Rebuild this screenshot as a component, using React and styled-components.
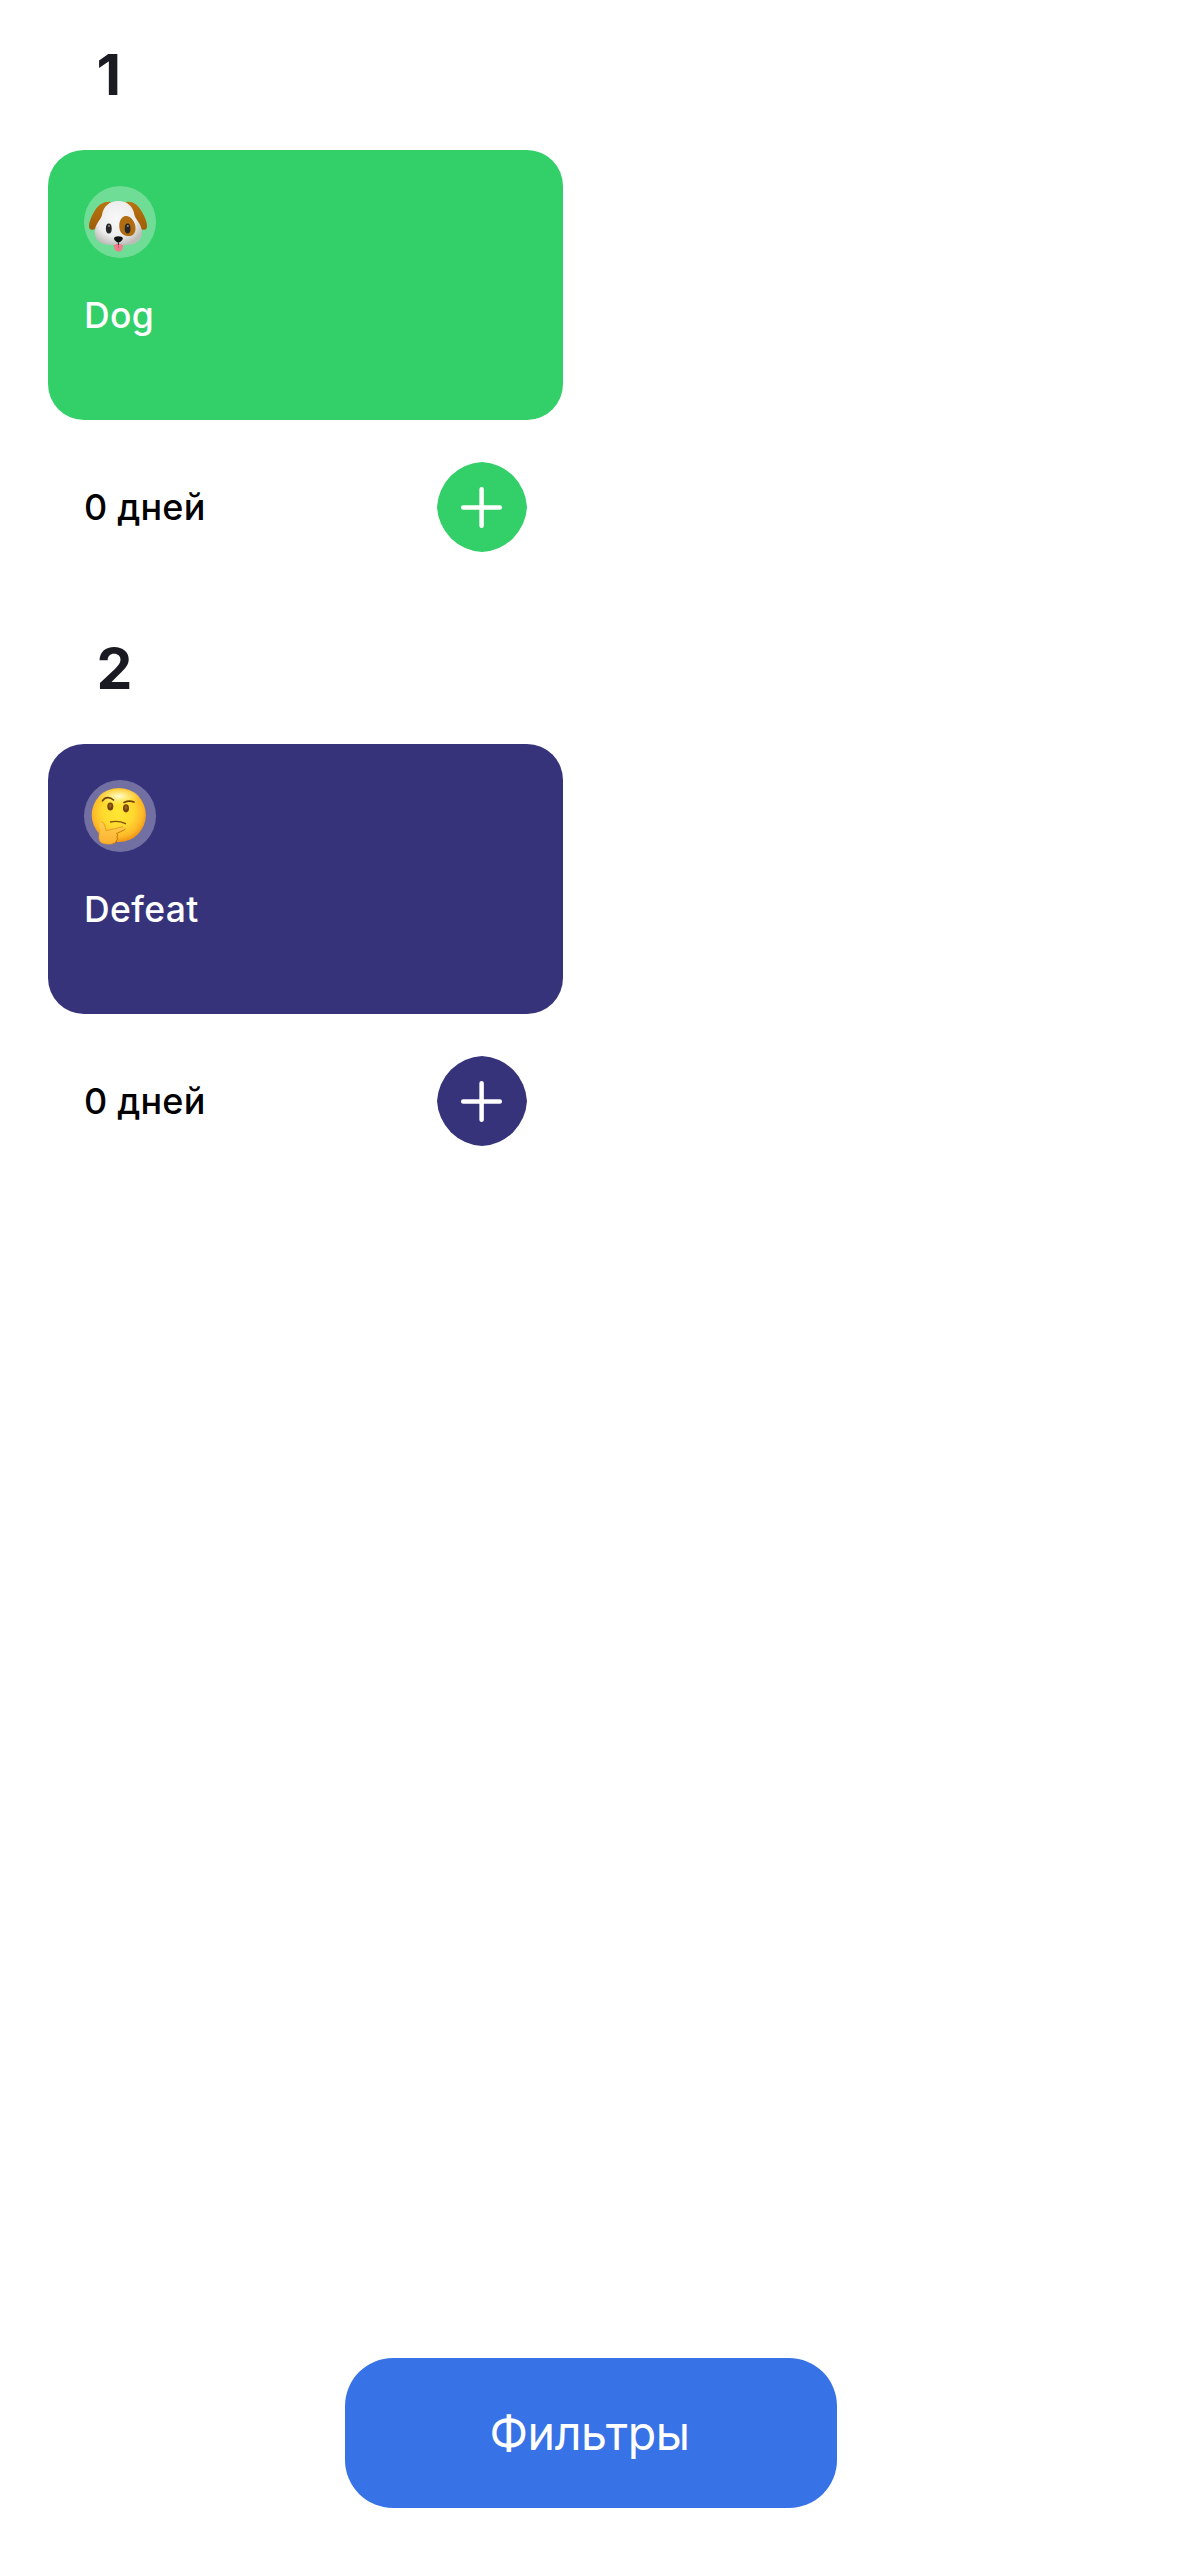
import React from "react";
import styled, { createGlobalStyle } from "styled-components";

const GlobalStyle = createGlobalStyle`
  * { box-sizing: border-box; }
  body { margin: 0; background: #fff; font-family: Inter, Roboto, sans-serif; }
`;

const Screen = styled.main`
  width: 1179px;
  height: 2556px;
  padding: 0 48px 48px;
  display: flex;
  flex-direction: column;
  background: #fff;
  overflow: hidden;
`;

const Section = styled.section`
  width: 515px;
  height: 594px;
  display: flex;
  flex-direction: column;
`;

const Heading = styled.h2`
  margin: 0;
  height: 150px;
  padding: 40px 0 0 48.5px;
  font-size: 57px;
  line-height: 70px;
  font-weight: 700;
  color: #1a1b22;
`;

const Card = styled.article`
  height: 270px;
  padding: 36px;
  border-radius: 36px;
  background: ${(p) => p.$color};
`;

const EmojiBadge = styled.div`
  width: 72px;
  height: 72px;
  border-radius: 50%;
  background: rgba(255, 255, 255, 0.3);
  svg { display: block; }
`;

const Name = styled.div`
  margin-top: 34px;
  font-size: 35.5px;
  line-height: 48px;
  font-weight: 500;
  letter-spacing: 0.4px;
  color: #fff;
`;

const Footer = styled.div`
  padding: 42px 36px 0;
  display: flex;
  align-items: center;
  justify-content: space-between;
`;

const Days = styled.span`
  font-size: 36px;
  line-height: 48px;
  font-weight: 500;
  letter-spacing: 0.2px;
  color: #000;
`;

const AddButton = styled.button`
  width: 90px;
  height: 90px;
  padding: 0;
  border: 0;
  background: none;
  color: ${(p) => p.$color};
  svg { display: block; }
`;

const FilterButton = styled.button`
  width: 492px;
  height: 150px;
  margin: auto 0 0 297px;
  padding: 0 3px 0 0;
  border: 0;
  border-radius: 48px;
  background: #3772e7;
  color: #fff;
  font-family: inherit;
  font-size: 46.5px;
  line-height: 60px;
  font-weight: 400;
  letter-spacing: -0.4px;
`;

const Dog = () => (
  <svg width="72" height="72" viewBox="0 0 72 72">
    <defs>
      <radialGradient id="fur" cx="0.46" cy="0.4" r="0.62">
        <stop offset="0" stopColor="#f8f8f8" />
        <stop offset="0.65" stopColor="#ededed" />
        <stop offset="1" stopColor="#bcbcb8" />
      </radialGradient>
      <linearGradient id="ear" x1="0" y1="0" x2="0" y2="1">
        <stop offset="0" stopColor="#b9730f" />
        <stop offset="1" stopColor="#9f5d08" />
      </linearGradient>
    </defs>
    <path d="M27 16C20 14.500 14 19 10 26C7 31 5 36 5 40C5 44 8 45 12 42.500L22 34Z" fill="url(#ear)" />
    <path d="M42 16C49 14.500 54 19 58 26C61 31 63 36 63 40C63 44 60 45 56 42.500L46 34Z" fill="url(#ear)" />
    <path d="M34.300 15C43 15 49 20 50.500 29C51 33 58 38 58 46C58 55.500 50 59 42 59H27C18.500 59 10.700 55.500 10.700 46C10.700 38 17.500 33 18 29C19.500 20 25.500 15 34.300 15Z" fill="url(#fur)" />
    <path d="M41.500 30C46.500 29.500 52 36 51.500 43C51 48.500 47.500 50.500 43.500 50C38.500 49.500 35.300 46 35.300 40C35.300 34 38 30.500 41.500 30Z" fill="#b06c10" />
    <ellipse cx="24.800" cy="42.500" rx="2.900" ry="5" fill="#262626" />
    <ellipse cx="43.600" cy="42.500" rx="2.900" ry="5" fill="#262626" />
    <circle cx="25" cy="40" r="1.100" fill="#888" />
    <circle cx="43.800" cy="40" r="1.100" fill="#888" />
    <path d="M30 59C31.500 57.500 37.500 57.500 39 59C39.500 63 37.500 65.500 34.500 65.500S29.500 63 30 59Z" fill="#ef7d90" />
    <path d="M34.500 59V62.500" stroke="#cf4f69" strokeWidth="0.800" />
    <path d="M30 52.500C30 49.500 38.800 49.500 38.800 52.500C38.800 54 36 56.500 34.400 56.500S30 54 30 52.500Z" fill="#111" />
    <path d="M34.400 56V59" stroke="#333" strokeWidth="1.100" />
  </svg>
);

const Thinking = () => (
  <svg width="72" height="72" viewBox="0 0 72 72">
    <defs>
      <radialGradient id="face" cx="0.48" cy="0.44" r="0.58">
        <stop offset="0" stopColor="#ffe832" />
        <stop offset="0.5" stopColor="#ffd92f" />
        <stop offset="0.8" stopColor="#fcb829" />
        <stop offset="1" stopColor="#ec8c10" />
      </radialGradient>
      <radialGradient id="shine" cx="0.5" cy="0.4" r="0.55">
        <stop offset="0" stopColor="#fffde0" stopOpacity="0.95" />
        <stop offset="1" stopColor="#ffef55" stopOpacity="0" />
      </radialGradient>
      <linearGradient id="hand" x1="0" y1="0" x2="0" y2="1">
        <stop offset="0" stopColor="#ffcf4d" />
        <stop offset="1" stopColor="#fcb02f" />
      </linearGradient>
    </defs>
    <circle cx="34.800" cy="35" r="27.100" fill="url(#face)" />
    <ellipse cx="34.800" cy="18" rx="21" ry="9" fill="url(#shine)" />
    <path d="M18.500 20.800C21 16.600 26 16.600 29.500 20" fill="none" stroke="#70420b" strokeWidth="1.700" strokeLinecap="round" />
    <path d="M40 22.400C43.500 20.800 47 20.800 50 22" fill="none" stroke="#70420b" strokeWidth="1.700" strokeLinecap="round" />
    <ellipse cx="26.300" cy="26.500" rx="3" ry="4.100" fill="#744308" />
    <ellipse cx="42" cy="28.300" rx="3" ry="4.100" fill="#744308" />
    <ellipse cx="26.300" cy="25.800" rx="1.200" ry="2" fill="#9a6818" />
    <ellipse cx="42" cy="27.600" rx="1.200" ry="2" fill="#9a6818" />
    <path d="M26.500 42C32 40.800 37 41.500 41.500 43.700" fill="none" stroke="#81500c" strokeWidth="1.300" strokeLinecap="round" />
    <path d="M17.500 42C20 42 21.200 46 22 50.500C27 50 33 47.800 39 46.800C42 46.500 42 49.300 39.500 50.300L32.500 53.500C34 54.500 33.800 56 33.200 57C34 58.500 33.500 60 32.300 61C32 62.500 31 63.500 29 63.800C25 64.300 19 64.300 16.500 62C14 59 15.200 54 15.800 50C16.200 46 15.300 42 17.500 42Z" fill="url(#hand)" />
    <path d="M17.500 42C20 42 21.200 46 22 50.500C27 50 33 47.800 39 46.800" fill="none" stroke="#dc8b1c" strokeWidth="0.700" />
    <path d="M41.300 49C40.500 50 39 50.600 32.500 53.500C34 54.500 33.800 56 32.800 57C34 58.500 33.500 60 32 61C32 62.500 31 63.500 29 63.800" fill="none" stroke="#b9690e" strokeWidth="0.900" strokeLinecap="round" />
    <path d="M29 63.800C25 64.300 19 64.300 16.500 62C14 59 15.200 54 15.800 50" fill="none" stroke="#ee9a25" strokeWidth="0.700" />
  </svg>
);

const Plus = () => (
  <svg width="90" height="90" viewBox="0 0 90 90">
    <path d="M0 45A47.500 47.500 0 0 1 45 0A47.500 47.500 0 0 1 90 45A47.500 47.500 0 0 1 45 90A47.500 47.500 0 0 1 0 45Z" fill="currentColor" />
    <path d="M26.200 45.500H62.800M44.600 27.200V63.800" stroke="#fff" strokeWidth="4.500" strokeLinecap="round" />
  </svg>
);

const trackers = [
  { title: "1", name: "Dog", color: "#33cf69", Emoji: Dog },
  { title: "2", name: "Defeat", color: "#36337b", Emoji: Thinking },
];

export default function App() {
  return (
    <>
      <GlobalStyle />
      <Screen>
        {trackers.map(({ title, name, color, Emoji }) => (
          <Section key={title}>
            <Heading>{title}</Heading>
            <Card $color={color}>
              <EmojiBadge><Emoji /></EmojiBadge>
              <Name>{name}</Name>
            </Card>
            <Footer>
              <Days>0 дней</Days>
              <AddButton $color={color} aria-label="+"><Plus /></AddButton>
            </Footer>
          </Section>
        ))}
        <FilterButton>Фильтры</FilterButton>
      </Screen>
    </>
  );
}
